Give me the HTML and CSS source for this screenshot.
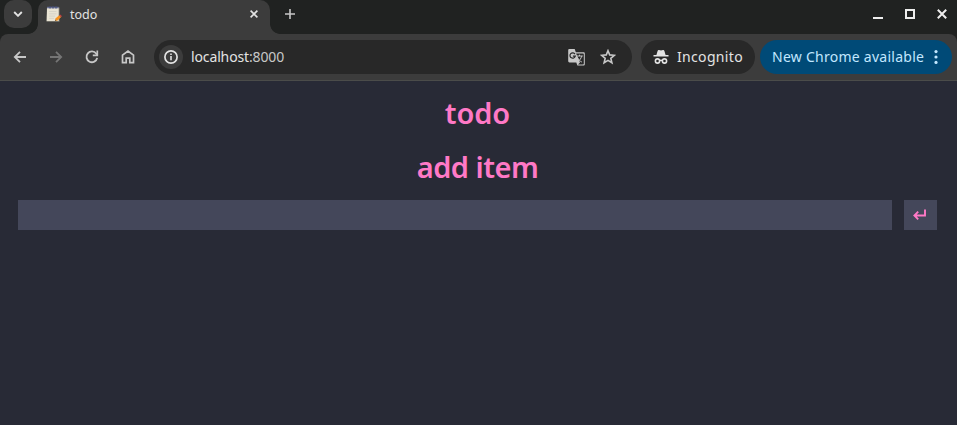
FILE: index.html
```html
<!DOCTYPE html>
<html lang="en">
<head>
<meta charset="utf-8">
<title>todo</title>
<link rel="stylesheet" href="styles.css">
</head>
<body>
<header class="tabstrip">
  <button class="tab-search" aria-label="Search tabs"><svg width="10" height="6" viewBox="0 0 10 6"><path d="M1.2 1l3.8 3.8L8.8 1" fill="none" stroke="#e3e3e3" stroke-width="1.9"/></svg></button>
  <div class="tab">
    <svg class="favicon" width="16" height="17" viewBox="0 0 16 17"><path d="M1.2 1.5h12.3v14.2H.5z" fill="#817f75"/><path d="M1 1.5h11.7v13.5H.7z" fill="#e9e4d4"/><path d="M1 .8h11.7v1.5H1z" fill="#6a7192"/><path d="M4 0v2.6M7 0v2.6M10 0v2.6" stroke="#414b78"/><path d="M3 5.5h7.5M3 7.8h7.5M3 10.1h6M3 12.4h5" stroke="#d3d0c5" stroke-width=".8"/><path d="M9 15l.7-2.8 3.6-3 1.8 1.9-3.5 3.3z" fill="#f79421"/><path d="M13.3 9.2l.9-.7 1.8 1.7-.9.9z" fill="#c64045"/><path d="M9 15l.4-1.5 1.2 1.1z" fill="#65543b"/></svg>
    <span class="tab-title">todo</span>
    <svg class="tab-close" width="8" height="8" viewBox="0 0 8 8"><path d="M.6.6l6.8 6.8M7.4.6L.6 7.4" stroke="#e3e3e3" stroke-width="1.6"/></svg>
  </div>
  <svg class="new-tab" width="10" height="10" viewBox="0 0 10 10"><path d="M5 0v10M0 5h10" stroke="#c7c7c7" stroke-width="1.6"/></svg>
  <div class="window-controls">
    <svg width="10" height="10" viewBox="0 0 10 10"><path d="M0 8h10v2H0z" fill="#eee"/></svg>
    <svg width="10" height="10" viewBox="0 0 10 10"><path d="M1 1h8v8H1z" fill="none" stroke="#eee" stroke-width="2"/></svg>
    <svg width="10" height="10" viewBox="0 0 10 10"><path d="M.8.8l8.4 8.4M9.2.8L.8 9.2" stroke="#eee" stroke-width="2"/></svg>
  </div>
</header>
<div class="toolbar-back">
<nav class="toolbar">
  <div class="nav-buttons">
    <svg width="16" height="16" viewBox="0 0 16 16"><path d="M14 8H3M8 2.8L2.8 8 8 13.2" fill="none" stroke="#c7c7c7" stroke-width="1.8"/></svg>
    <svg width="16" height="16" viewBox="0 0 16 16"><path d="M2 8h11M8 2.8L13.2 8 8 13.2" fill="none" stroke="#757575" stroke-width="1.8"/></svg>
    <svg width="16" height="16" viewBox="0 0 16 16"><path d="M13.2 8.9A5.4 5.4 0 1 1 12.3 4.7L13.5 6" fill="none" stroke="#c7c7c7" stroke-width="1.8"/><path d="M13.3 1.6v4.7H8.8" fill="none" stroke="#c7c7c7" stroke-width="1.7"/></svg>
    <svg width="16" height="16" viewBox="0 0 16 16"><path d="M2.5 6.1L8 2l5.5 4.1v7.6H9.8V9.1H6.2v4.6H2.5z" fill="none" stroke="#c7c7c7" stroke-width="1.7"/></svg>
  </div>
  <div class="address">
    <span class="site-info"><svg width="14" height="14" viewBox="0 0 14 14"><circle cx="7" cy="7" r="6.1" fill="none" stroke="#e3e3e3" stroke-width="1.7"/><path d="M7 6v4.3M7 3.4v1.5" stroke="#e3e3e3" stroke-width="1.6"/></svg></span>
    <span class="url">localhost<span class="port">:8000</span></span>
    <svg class="translate" width="17" height="17" viewBox="0 0 17 17"><path d="M1.5 0h5.2l1.1 3.3h7.7c.8 0 1.3.5 1.3 1.3v10.6c0 .8-.5 1.3-1.3 1.3H9.4L8.3 13.4H1.5C.7 13.4.2 12.9.2 12.1V1.3C.2.5.7 0 1.5 0z" fill="#c7c7c7"/><path d="M8.1 4.4h7c.4 0 .7.3.7.7v9.6c0 .4-.3.7-.7.7H10l2-2z" fill="#282828"/><path d="M7 5.1A2.7 2.7 0 1 0 7.3 7.2H4.9" fill="none" stroke="#282828" stroke-width="1.2"/><path d="M8.5 7h6.3M11.5 5.7V7M9.4 8.2c.9 2.3 2.5 3.9 4.5 4.9M13.6 7.2c-.5 2.4-1.9 4.2-4 5.4" fill="none" stroke="#c7c7c7" stroke-width="1"/></svg>
    <svg class="star" width="16" height="16" viewBox="0 0 16 16"><path d="M8 1.7l1.7 4.2 4.6.4-3.5 3 1.1 4.5L8 11.4l-3.9 2.4 1.1-4.5-3.5-3 4.6-.4z" fill="none" stroke="#c7c7c7" stroke-width="1.6"/></svg>
  </div>
  <div class="incognito">
    <svg width="16" height="16" viewBox="0 0 16 16"><path d="M3.4 6l1.2-4.1C4.8 1.1 5.4.8 6 1l2 .5 2-.5c.6-.2 1.2.1 1.4.9L12.6 6h2.9v1.6H.5V6z" fill="#e3e3e3"/><path d="M6.7 11.7q1.3-.7 2.6 0" fill="none" stroke="#e3e3e3" stroke-width="1.5"/><circle cx="4.5" cy="12" r="2.1" fill="none" stroke="#e3e3e3" stroke-width="1.6"/><circle cx="11.5" cy="12" r="2.1" fill="none" stroke="#e3e3e3" stroke-width="1.6"/></svg>
    <span class="incognito-label">Incognito</span>
  </div>
  <div class="update">
    <span class="update-label">New Chrome available</span>
    <svg width="4" height="16" viewBox="0 0 4 16"><g fill="#c2e7ff"><circle cx="2" cy="2.6" r="1.6"/><circle cx="2" cy="8" r="1.6"/><circle cx="2" cy="13.4" r="1.6"/></g></svg>
  </div>
</nav>
</div>
<main class="page">
  <h1 class="heading heading-list">todo</h1>
  <h1 class="heading heading-add">add item</h1>
  <form class="add-form">
    <input class="item-input" type="text" aria-label="Item">
    <button class="submit" type="button" aria-label="Add"><svg width="15" height="12" viewBox="0 0 15 12"><path d="M12 .5v6H1.5M5.2 2.7L1.4 6.5l3.8 3.8" fill="none" stroke="#ff79c6" stroke-width="1.9"/></svg></button>
  </form>
</main>
</body>
</html>
```
FILE: styles.css
```css
* { box-sizing: border-box; }

body {
  margin: 0;
  height: 425px;
  display: flex;
  flex-direction: column;
  overflow: hidden;
  background: #282a36;
  font-family: "Noto Sans", "Open Sans", sans-serif;
}

svg { display: block; flex: none; }
button { border: 0; padding: 0; display: flex; align-items: center; justify-content: center; }

.tabstrip {
  height: 34px;
  flex: none;
  display: flex;
  align-items: flex-start;
  background: #202221;
}

.tab-search {
  width: 28px;
  height: 28px;
  margin-left: 4px;
  border-radius: 10px;
  background: #3c3c3c;
}

.tab {
  position: relative;
  width: 232px;
  height: 34px;
  margin-left: 6px;
  padding: 0 12px 6px 8px;
  display: flex;
  align-items: center;
  border-radius: 10px 10px 0 0;
  background: #3c3c3c;
}

.tab::before,
.tab::after {
  content: "";
  position: absolute;
  bottom: 0;
  width: 10px;
  height: 10px;
}

.tab::before {
  left: -10px;
  background: radial-gradient(circle at 0 0, transparent 9.5px, #3c3c3c 10.2px);
}

.tab::after {
  right: -10px;
  background: radial-gradient(circle at 100% 0, transparent 9.5px, #3c3c3c 10.2px);
}

.tab-title {
  margin: 2px 0 0 8px;
  font-size: 12.5px;
  line-height: 16px;
  color: #e3e3e3;
}

.tab-close { margin-left: auto; }
.new-tab { margin: 9px 0 0 15px; }

.window-controls {
  margin: 9px 10px 0 auto;
  display: flex;
  gap: 22px;
}

.toolbar-back { flex: none; background: #202221; }

.toolbar {
  height: 47px;
  padding: 0 5px 0 12px;
  display: flex;
  align-items: center;
  border-bottom: 1px solid #4b4c4a;
  border-radius: 8px 8px 0 0;
  background: #3c3c3c;
}

.nav-buttons { display: flex; gap: 20px; }

.address {
  width: 478px;
  height: 34px;
  margin-left: 18px;
  padding: 0 16px 0 5px;
  display: flex;
  align-items: center;
  border-radius: 17px;
  background: #282828;
}

.site-info {
  width: 24px;
  height: 24px;
  display: flex;
  align-items: center;
  justify-content: center;
  border-radius: 50%;
  background: #3c3c3c;
}

.url {
  margin-left: 8px;
  font-size: 14px;
  line-height: 20px;
  letter-spacing: -0.13px;
  color: #e3e3e3;
}

.port { color: #c7c7c7; }
.translate { margin-left: auto; }
.star { margin-left: 15px; }

.incognito {
  width: 114px;
  height: 34px;
  margin-left: 9px;
  padding-left: 12px;
  display: flex;
  align-items: center;
  border-radius: 17px;
  background: #282828;
}

.incognito-label {
  margin-left: 8px;
  font-size: 14px;
  line-height: 20px;
  letter-spacing: 0.33px;
  color: #e3e3e3;
}

.update {
  width: 192px;
  height: 34px;
  margin-left: 5px;
  padding: 0 14px 0 12px;
  display: flex;
  align-items: center;
  justify-content: space-between;
  border-radius: 17px;
  background: #004a77;
}

.update-label {
  font-size: 14px;
  line-height: 20px;
  letter-spacing: 0.26px;
  white-space: nowrap;
  color: #c2e7ff;
}

.page {
  flex: 1;
  padding: 15px 20px 0 18px;
}

.heading {
  margin: 0;
  font-size: 29px;
  font-weight: 600;
  line-height: 34px;
  text-align: center;
  color: #ff79c6;
}

.heading-list { letter-spacing: -0.1px; }

.heading-add {
  margin-top: 20px;
  letter-spacing: -0.5px;
}

.add-form {
  margin-top: 16px;
  display: flex;
  gap: 12px;
}

.item-input {
  flex: 1;
  height: 30px;
  border: 0;
  border-radius: 0;
  background: #44475a;
}

.submit {
  width: 33px;
  height: 30px;
  background: #44475a;
}
```
